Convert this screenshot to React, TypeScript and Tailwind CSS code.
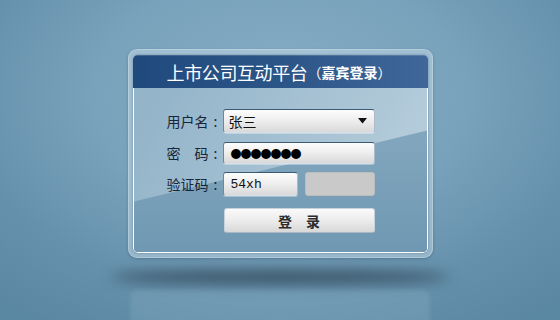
import React from "react";

const inputCls =
  "rounded-[3px] border border-t-[#3b5a76] border-l-[#6a88a0] border-r-[#aabccb] border-b-[#d5e0e8] bg-[linear-gradient(to_bottom,#fdfdfd_0%,#efefef_45%,#d9d9d9_100%)] shadow-[0_1px_0_rgba(255,255,255,0.35)]";

function Label({ children }: { children: React.ReactNode }) {
  return (
    <span className="w-[56px] flex items-center leading-none">
      <span className="w-[42px]">{children}</span>
      <span className="w-[14px] text-center">:</span>
    </span>
  );
}

export default function App() {
  return (
    <div className="w-[560px] h-[320px] overflow-hidden flex flex-col items-center pt-[49px] bg-[radial-gradient(ellipse_75%_85%_at_50%_30%,#88aec5_0%,#78a1bb_45%,#6691ac_75%,#5a87a2_100%)] font-['Noto_Sans_CJK_SC','Noto_Sans',sans-serif]">
      {/* frame */}
      <div className="w-[305px] h-[209px] shrink-0 rounded-[9px] pt-[5px] px-[4px] pb-[4px] bg-[rgba(205,225,236,0.45)] border border-[rgba(255,255,255,0.25)] shadow-[0_1px_3px_rgba(40,70,90,0.35)]">
        <div className="h-full rounded-[5px] overflow-hidden flex flex-col shadow-[0_0_2px_rgba(20,40,60,0.45)]">
          {/* header */}
          <div className="h-[33px] shrink-0 flex items-center justify-center pr-[2px] text-white bg-[linear-gradient(to_right,#204a7e_0%,#2c5587_50%,#41679a_100%)] shadow-[inset_0_1px_0_rgba(255,255,255,0.15)]">
            <span className="text-[18px] leading-none tracking-[-0.4px]">上市公司互动平台</span>
            <span className="text-[14px] leading-none">（</span>
            <span className="text-[14px] leading-none font-bold">嘉宾登录</span>
            <span className="text-[14px] leading-none">）</span>
          </div>
          {/* body */}
          <div className="relative flex-1 border-x border-b border-white rounded-b-[5px] bg-[#7b9fb8] overflow-hidden">
            <svg className="absolute inset-0 w-full h-full" viewBox="0 0 295 166" preserveAspectRatio="none">
              <defs>
                <linearGradient id="lo" x1="0" y1="0" x2="0" y2="1">
                  <stop offset="0" stopColor="#88abc1" />
                  <stop offset="0.6" stopColor="#7aa0b9" />
                  <stop offset="1" stopColor="#7098b2" />
                </linearGradient>
                <linearGradient id="hi" x1="0" y1="0.4" x2="1" y2="0.6">
                  <stop offset="0" stopColor="#93b4c9" />
                  <stop offset="0.6" stopColor="#a8c3d4" />
                  <stop offset="1" stopColor="#b6cddb" />
                </linearGradient>
              </defs>
              <rect x="0" y="0" width="295" height="166" fill="url(#lo)" />
              <polygon points="0,0 295,0 295,43 0,115" fill="url(#hi)" />
            </svg>
            <div className="relative flex flex-col pl-[33px] pt-[21px] text-[14px] text-[#17263a]">
              {/* username */}
              <div className="flex items-center h-[24px]">
                <Label>用户名</Label>
                <div className={`w-[152px] h-[24px] flex items-center justify-between pl-[5px] pr-[7px] ${inputCls}`}>
                  <span className="text-[14px] leading-none text-[#111]">张三</span>
                  <svg width="9" height="6" viewBox="0 0 9 6">
                    <polygon points="0,0 9,0 4.5,5.5" fill="#111" />
                  </svg>
                </div>
              </div>
              {/* password */}
              <div className="flex items-center h-[22px] mt-[9px]">
                <Label>密　码</Label>
                <div className={`w-[152px] h-[22px] flex items-center pl-[7px] ${inputCls}`}>
                  <span className="text-[11px] leading-none tracking-[-1px] text-black">●●●●●●●</span>
                </div>
              </div>
              {/* captcha */}
              <div className="flex items-center h-[24px] mt-[8px]">
                <Label>验证码</Label>
                <div className={`w-[75px] h-[24px] flex items-center pl-[7px] ${inputCls}`}>
                  <span className="text-[13px] leading-none text-[#111] font-['Liberation_Mono',monospace]">54xh</span>
                </div>
                <div className="w-[70px] h-[24px] ml-[7px] rounded-[3px] bg-[#c9c9c9] border border-[#bdbdbd]" />
              </div>
              {/* button */}
              <div className="flex mt-[12px] pl-[57px]">
                <button className="w-[151px] h-[25px] rounded-[3px] flex items-center justify-center bg-[linear-gradient(to_bottom,#fafafa_0%,#ececec_50%,#d8d8d8_100%)] border border-[#c7d3dc] border-b-[#a9b8c4]">
                  <span className="text-[14px] leading-none font-bold text-[#2a2a2a]">登　录</span>
                </button>
              </div>
            </div>
          </div>
        </div>
      </div>
      {/* shadow */}
      <div className="w-[340px] h-[14px] mt-[12px] shrink-0 rounded-[50%] bg-[rgba(28,45,58,0.65)] blur-[7px]" />
      {/* reflection */}
      <div className="w-[300px] h-[40px] mt-[6px] shrink-0 rounded-[8px] bg-[rgba(200,225,238,0.12)] blur-[2px]" />
    </div>
  );
}
